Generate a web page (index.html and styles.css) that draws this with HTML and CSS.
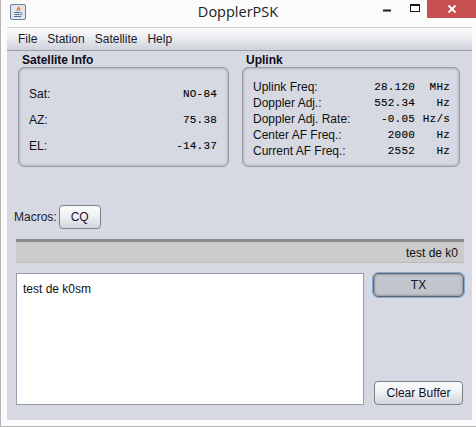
FILE: index.html
```html
<!DOCTYPE html>
<html lang="en">
<head>
<meta charset="utf-8">
<title>DopplerPSK</title>
<link rel="stylesheet" href="styles.css">
</head>
<body>
<div class="window">
  <header class="titlebar">
    <span class="appicon">
      <svg width="16" height="16" viewBox="0 0 16 16">
        <rect x="0.5" y="0.5" width="15" height="15" rx="1.5" fill="#dfe6f0" stroke="#6f8199"/>
        <path d="M8.500 2.500c1.500 1.500-2.500 2.500-1 4.500M10 4c.5 1-1.500 1.500-.5 3" fill="none" stroke="#e8701a" stroke-width="1.300"/>
        <path d="M4 8.500h6M4.500 10.500h5M4 12.500h7" stroke="#5a6f8c" stroke-width="1"/>
        <path d="M10.500 8.500c2 0 2 2-.5 2.500" fill="none" stroke="#5a6f8c"/>
      </svg>
    </span>
    <span class="title">DopplerPSK</span>
    <div class="controls">
      <svg class="min" width="8" height="3" viewBox="0 0 8 3"><rect width="8" height="2" y="0.500" fill="#1c1c1c"/></svg>
      <svg class="max" width="10" height="8" viewBox="0 0 10 8"><rect x="0.500" y="0.500" width="9" height="7" fill="none" stroke="#1c1c1c"/><rect y="0" width="10" height="2" fill="#1c1c1c"/></svg>
      <span class="close">
        <svg width="10" height="10" viewBox="0 0 10 10"><path d="M1.500 1.500l7 7M8.500 1.500l-7 7" stroke="#fff" stroke-width="1.800"/></svg>
      </span>
    </div>
  </header>
  <div class="client">
    <nav class="menubar">
      <span>File</span><span>Station</span><span>Satellite</span><span>Help</span>
    </nav>
    <main class="content">
      <section class="panels">
        <div class="panel panel-sat">
          <h2 class="panel-title">Satellite Info</h2>
          <div class="box sat-box">
            <div class="sat-row"><span>Sat:</span><span class="mono">NO-84</span></div>
            <div class="sat-row"><span>AZ:</span><span class="mono">75.38</span></div>
            <div class="sat-row"><span>EL:</span><span class="mono">-14.37</span></div>
          </div>
        </div>
        <div class="panel panel-up">
          <h2 class="panel-title">Uplink</h2>
          <div class="box up-box">
            <div class="up-row"><span>Uplink Freq:</span><span class="mono val">28.120</span><span class="mono unit">MHz</span></div>
            <div class="up-row"><span>Doppler Adj.:</span><span class="mono val">552.34</span><span class="mono unit">Hz</span></div>
            <div class="up-row"><span>Doppler Adj. Rate:</span><span class="mono val">-0.05</span><span class="mono unit">Hz/s</span></div>
            <div class="up-row"><span>Center AF Freq.:</span><span class="mono val">2000</span><span class="mono unit">Hz</span></div>
            <div class="up-row"><span>Current AF Freq.:</span><span class="mono val">2552</span><span class="mono unit">Hz</span></div>
          </div>
        </div>
      </section>
      <div class="macros">
        <span class="macros-label">Macros:</span>
        <button class="btn btn-cq" type="button">CQ</button>
      </div>
      <div class="rxbar">test de k0</div>
      <div class="bottom">
        <div class="textarea">test de k0sm</div>
        <div class="side">
          <button class="btn btn-tx" type="button">TX</button>
          <button class="btn btn-clear" type="button">Clear Buffer</button>
        </div>
      </div>
    </main>
  </div>
</div>
</body>
</html>
```
FILE: styles.css
```css
* { box-sizing: border-box; }
html, body { margin: 0; padding: 0; }
body {
  width: 476px;
  height: 427px;
  overflow: hidden;
  background: #fff;
  font-family: "Liberation Sans", Arial, sans-serif;
  font-size: 12px;
  color: #111;
}
.window {
  width: 476px;
  height: 427px;
  background: #fbfbfb;
  border-left: 1px solid #b5b5b5;
  border-bottom: 1px solid #b5b5b5;
  display: flex;
  flex-direction: column;
  padding-left: 6px;
  padding-right: 4px;
  padding-bottom: 6px;
}
.titlebar {
  height: 27px;
  flex: none;
  display: flex;
  align-items: flex-start;
  margin-left: -7px;
  margin-right: -4px;
  position: relative;
}
.appicon { margin: 4px 0 0 10px; height: 16px; display: block; }
.title {
  position: absolute;
  left: 0;
  right: 0;
  top: 2px;
  text-align: center;
  font-family: "Open Sans", "Noto Sans", sans-serif;
  font-size: 14.5px;
  line-height: 20px;
  color: #222;
}
.controls {
  margin-left: auto;
  display: flex;
  align-items: flex-start;
  position: relative;
}
.min { margin-top: 9px; margin-right: 19px; }
.max { margin-top: 4px; margin-right: 7px; }
.close {
  width: 49px;
  height: 18px;
  background: #c75050;
  display: flex;
  align-items: center;
  justify-content: center;
}
.client {
  flex: 1;
  display: flex;
  flex-direction: column;
  background: #d6d9e2;
  border-top: 1px solid #d4d4d4;
  min-height: 0;
}
.menubar {
  height: 23px;
  flex: none;
  display: flex;
  gap: 10px;
  align-items: center;
  padding: 0 0 0 11px;
  background: linear-gradient(#fbfbfc, #eff0f3 35%, #ced1d9);
  border-bottom: 1px solid #9a9dac;
  color: #1a1a2a;
}
.content {
  flex: 1;
  display: flex;
  flex-direction: column;
  padding: 3px 7px 15px 7px;
}
.panels { display: flex; height: 142px; flex: none; }
.panel-sat { width: 215px; padding-left: 4px; }
.panel-up { margin-left: 10px; width: 225px; padding-left: 3px; }
.panel-title {
  margin: 0;
  font-size: 12px;
  font-weight: bold;
  line-height: 13px;
  height: 13px;
  padding-left: 4px;
  color: #0c0c18;
}
.box {
  height: 100px;
  border: 1px solid #9b9da6;
  border-radius: 6px;
  box-shadow: inset 0 0 3px #8f929b;
  background: #d6d9e2;
}
.sat-box {
  width: 211px;
  padding: 18px 11px 12px 10px;
  display: flex;
  flex-direction: column;
  justify-content: space-between;
}
.up-box {
  width: 218px;
  padding: 11px 9px 0 10px;
}
.sat-row { display: flex; justify-content: space-between; align-items: center; height: 16px; }
.up-row { display: flex; align-items: center; height: 16px; }
.up-row span:first-child { width: 100px; white-space: nowrap; }
.mono {
  font-family: "Liberation Mono", "Courier New", monospace;
  font-size: 11px;
  letter-spacing: 0.2px;
  color: #000;
  -webkit-text-stroke: 0.1px #000;
}
.val { width: 62px; text-align: right; }
.unit { width: 35px; text-align: right; }
.macros { display: flex; align-items: center; height: 24px; margin-top: 9px; flex: none; }
.macros-label { color: #1a1a2a; margin-right: 2px; }
.btn {
  font: 12px "Liberation Sans", Arial, sans-serif;
  color: #111122;
  border: 1px solid #7d8087;
  border-radius: 4px;
  background: linear-gradient(#fcfcfd, #f0f1f4 45%, #d2d5dc);
  padding: 0;
  height: 24px;
}
.btn-cq { width: 42px; }
.rxbar {
  margin: 10px 0 0 2px;
  width: 448px;
  height: 24px;
  flex: none;
  background: #cbcbcb;
  border-top: 3px solid #8c8c8c;
  border-bottom: 1px solid #b9bbbf;
  text-align: right;
  padding: 3px 6px 0 0;
  line-height: 16px;
  color: #111;
}
.bottom { display: flex; flex: 1; margin: 10px 0 0 2px; min-height: 0; }
.textarea {
  width: 348px;
  background: #fff;
  border: 1px solid #9a9dac;
  padding: 7px 6px;
  line-height: 16px;
  color: #111;
}
.side {
  width: 100px;
  padding-left: 9px;
  display: flex;
  flex-direction: column;
  justify-content: space-between;
}
.btn-tx {
  width: 91px;
  height: 24px;
  background: #c2c5cc;
  border: 1px solid #63656b;
  outline: 1px solid #84a9d1;
  box-shadow: inset 0 0 3px #666;
  border-radius: 5px;
}
.btn-clear { width: 89px; margin-left: 1px; }
```
